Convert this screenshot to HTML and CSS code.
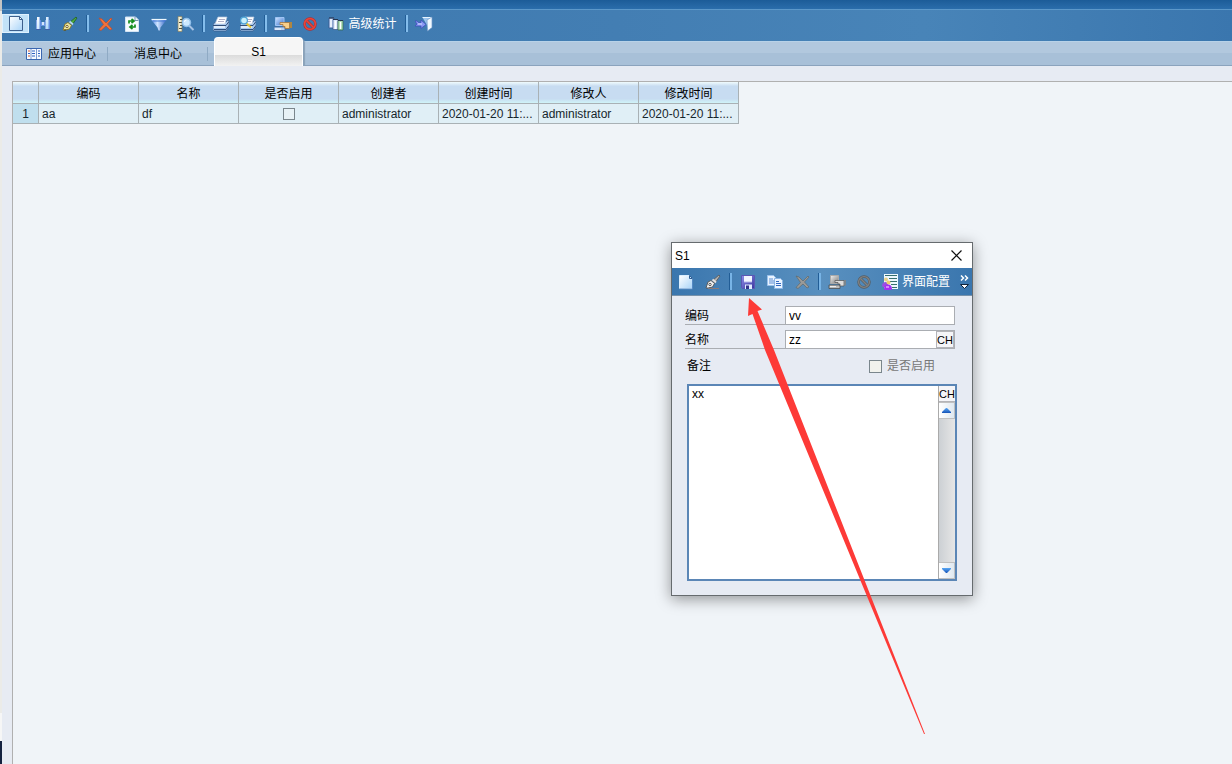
FILE: index.html
```html
<!DOCTYPE html>
<html lang="zh-CN">
<head>
<meta charset="utf-8">
<title>S1</title>
<link rel="stylesheet" href="styles.css">
</head>
<body>
<svg class="defs" aria-hidden="true">
  <defs>
    <linearGradient id="paper" x1="0" y1="0" x2="1" y2="1"><stop offset="0" stop-color="#fff"/><stop offset="1" stop-color="#a9d4f8"/></linearGradient>
    <linearGradient id="lens" x1="0" y1="0" x2="1" y2="0"><stop offset="0" stop-color="#6f9ce6"/><stop offset=".5" stop-color="#e4f0ff"/><stop offset="1" stop-color="#5a8adb"/></linearGradient>
    <linearGradient id="funnel" x1="0" y1="0" x2="1" y2="0"><stop offset="0" stop-color="#5b8fe6"/><stop offset=".4" stop-color="#cfe4ff"/><stop offset="1" stop-color="#2f62c4"/></linearGradient>
    <linearGradient id="floppy" x1="0" y1="0" x2="1" y2="1"><stop offset="0" stop-color="#8e8ee8"/><stop offset="1" stop-color="#3a36a0"/></linearGradient>
    <linearGradient id="grayfill" x1="0" y1="0" x2="1" y2="1"><stop offset="0" stop-color="#f2f2f2"/><stop offset="1" stop-color="#777"/></linearGradient>
    <linearGradient id="screen" x1="0" y1="0" x2="1" y2="1"><stop offset="0" stop-color="#cfe4ff"/><stop offset="1" stop-color="#3b74d0"/></linearGradient>
    <linearGradient id="arrowblue" x1="0" y1="0" x2="0" y2="1"><stop offset="0" stop-color="#5aa8f4"/><stop offset="1" stop-color="#1453b8"/></linearGradient>
  </defs>
  <symbol id="i-new" viewBox="0 0 16 16"><path d="M1.5.5h10l3 3v11h-13z" fill="url(#paper)" stroke="#3d5f8c"/><path d="M11.500.5v3h3z" fill="#fff" stroke="#3d5f8c"/></symbol>
  <symbol id="i-page" viewBox="0 0 16 16"><path d="M1.5 1.500h10l3 3v10h-13z" fill="url(#paper)" stroke="#dcefff"/><path d="M11.500 1.500v3h3z" fill="#c9e3fa" stroke="#2f5f96"/><path d="M14.500 5v10h-13" fill="none" stroke="#5489c4"/></symbol>
  <symbol id="i-find" viewBox="0 0 16 16"><path d="M2 1h3v3h1v10H1V4h1zM11 1h3v3h1v10h-5V4h1z" fill="url(#paper)"/><path d="M5 1v3h1v10H4.500V1zM14 1v3h1v10h-1.500V1z" fill="#5f8be0"/><path d="M1 4h1v10H1zM10 4h1v10h-1z" fill="#88a8e6"/><path d="M6 6h4v4H6z" fill="#6f9ae4"/><path d="M7 6h2v3H7z" fill="#d6e6fc"/><path d="M1 13.500h5M10 13.500h5" stroke="#3f5fa8"/></symbol>
  <symbol id="i-pen" viewBox="0 0 16 16"><path d="M14 1l1 1-5 7-2.500-2.500z" fill="#4cab3c" stroke="#215c2b" stroke-width=".8"/><path d="M7.500 5.500l3.500 3" stroke="#b4d4f4" stroke-width="2"/><path d="M6 6.500l3.500 3-2 3.500-4.500 1H1L3 8z" fill="#f0e9a0" stroke="#877322" stroke-width=".9"/><circle cx="5" cy="10.500" r="1.200" fill="#fff" stroke="#58480f" stroke-width=".8"/><path d="M2 14h2" stroke="#58480f"/></symbol>
  <symbol id="i-del" viewBox="0 0 16 16"><path d="M2 2l3 1 4 4 5-5 1 1-4.500 5L15 13l-2 1-4-4-5 4.500-2-1L6.500 8.500z" fill="#f0733b" stroke="#c2492b" stroke-width=".7"/></symbol>
  <symbol id="i-refresh" viewBox="0 0 16 16"><path d="M1.500 1h10l3 3v11.500h-13z" fill="#f6fbff" stroke="#d4e4f4"/><path d="M11 1v3.500h3.500" fill="none" stroke="#7393ae"/><path d="M5 7.500V5h4M7.500 3l2.500 2-2.500 2M11 8.500V11H7M8.500 9L6 11l2.500 2" fill="none" stroke="#168f20" stroke-width="1.700"/></symbol>
  <symbol id="i-filter" viewBox="0 0 16 16"><path d="M.5 4h15L9.500 11.500 9 14.500H7.500L6.500 11.500z" fill="url(#funnel)"/><path d="M.5 3.500h15" stroke="#eef8ff" stroke-width="1.200"/><path d="M2 5h12" stroke="#4379d4"/></symbol>
  <symbol id="i-search" viewBox="0 0 18 16"><path d="M1 .5h4v15H1z" fill="#f2edcf" stroke="#857f61" stroke-width=".7"/><path d="M3 3.500h2M2 6.500h3M3 9.500h2M2 12.500h3" stroke="#51513d"/><path d="M12 9.500l4.500 4.500" stroke="#a6c2e4" stroke-width="2"/><circle cx="9.500" cy="6.500" r="4" fill="#cce9ff" stroke="#91bfe9" stroke-width="1.500"/><path d="M7.500 6q0-2 2-2" stroke="#fff" fill="none"/></symbol>
  <symbol id="i-print" viewBox="0 0 16 16"><path d="M1 7l3-1h9l2-2 1 1v6l-3 4H1L0 14V9z" fill="#a6c8ee" stroke="#375a88" stroke-width=".7"/><path d="M5 1h9l-2 7H2z" fill="#fff" stroke="#b4c4de" stroke-width=".7"/><path d="M6 3.500h6M5 5.500h6" stroke="#b0aec6"/><path d="M0 9.500h13l3-4" fill="none" stroke="#334e78"/><path d="M1 11h11" stroke="#f3faff" stroke-width="1.500"/><path d="M1 13.500h12l3-4" fill="none" stroke="#2d4d7c"/></symbol>
  <symbol id="i-preview" viewBox="0 0 16 16"><use href="#i-print"/><path d="M6 7l5 4.500" stroke="#e9c737" stroke-width="2"/><circle cx="4" cy="4.500" r="3.400" fill="#c8effc" stroke="#4fa4d6" stroke-width="1.200"/></symbol>
  <symbol id="i-pc" viewBox="0 0 18 16"><path d="M1.500 1.500h8.500v8H1.500z" fill="url(#screen)" stroke="#9fc4f4"/><path d="M0 11h11v3.500H0z" fill="#b4d0f2" stroke="#3a5f96" stroke-width=".7"/><path d="M1 13h6" stroke="#fff"/><path d="M6 6.500h9.500v6H11v-2H9V8.500H6z" fill="#f8cf8a" stroke="#a8702f" stroke-width=".7"/><path d="M15.500 6H18v6h-2.500z" fill="#b08640"/></symbol>
  <symbol id="i-ban" viewBox="0 0 16 16"><g fill="none" stroke="#b3282b" stroke-width="2.600"><circle cx="8" cy="8" r="5.400"/><path d="M4.500 4.500l7 7"/></g><g fill="none" stroke="#e6463b" stroke-width="1.600"><circle cx="8" cy="8" r="5.400"/><path d="M4.500 4.500l7 7"/></g></symbol>
  <symbol id="i-books" viewBox="0 0 16 16"><path d="M1 2h5v10H1z" fill="#b9d0f6" stroke="#3b5488" stroke-width=".7"/><path d="M5 3.500h5v10H5z" fill="#dce9ff" stroke="#3b5488" stroke-width=".7"/><path d="M10 4.500h5v9.500h-5z" fill="#a9dbb1" stroke="#34694c" stroke-width=".7"/><path d="M3 3v8M7.500 5v8M12.500 6v7" stroke="#fff" stroke-width="1.300"/><path d="M1 2h5M5 3.500h5M10 4.500h5" stroke="#25354f"/></symbol>
  <symbol id="i-exit" viewBox="0 0 18 16"><path d="M7.500 1.500h9v10h-3" fill="#9cc4ee" stroke="#e8f5ff"/><path d="M12 4l5-3v10.500L12.500 15z" fill="#f2f9ff" stroke="#7199c8" stroke-width=".7"/><path d="M0 5h2l1.500 1.500H6V4l5 4.500-5 4V10H0l2-2z" fill="#8a99f2" stroke="#3d48ba" stroke-width=".7"/><path d="M3 8h4" stroke="#d7dcff"/></symbol>
  <symbol id="i-app" viewBox="0 0 16 12"><path d="M.5.5h15v11H.5z" fill="#f7faff" stroke="#3b67b0"/><path d="M5 1v10M10.500 1v10" stroke="#7d9ad0"/><path d="M2 3h2M2 8h2" stroke="#d0562f"/><path d="M2 5.500h2M6 3h3M6 5.500h3M6 8h3M12 3h2M12 5.500h2M12 8h2" stroke="#2f60c0"/></symbol>
  <symbol id="i-graypen" viewBox="0 0 16 16"><path d="M14 1l1 1-5 7-2.500-2.500z" fill="#b2b2b2" stroke="#555" stroke-width=".8"/><path d="M7.500 5.500l3.500 3" stroke="#e4e4e4" stroke-width="2"/><path d="M6 6.500l3.500 3-2 3.500-4.500 1H1L3 8z" fill="#f4f4f4" stroke="#555" stroke-width=".9"/><circle cx="5" cy="10.500" r="1.200" fill="#fff" stroke="#333" stroke-width=".8"/><path d="M3 14.500h11" stroke="#8a7a78"/></symbol>
  <symbol id="i-save" viewBox="0 0 16 16"><path d="M1.500 1.500h13v13h-12l-1-1z" fill="url(#floppy)" stroke="#5a58b4"/><path d="M4 2h8v6H4z" fill="#f2f5ff"/><path d="M4 8h8" stroke="#b5b8e8"/><path d="M5 10.500h7V15H5z" fill="#e2ecff"/><path d="M6 11.500h3V15H6z" fill="#33358c"/></symbol>
  <symbol id="i-copy" viewBox="0 0 16 14"><path d="M.5.500h6l2 2v8h-8z" fill="#eaf4ff" stroke="#9cc2ec"/><path d="M2 4h4M2 6h5M2 8h5" stroke="#5a8cd4"/><path d="M7.500 3.500h6l2 2v8h-8z" fill="#eaf4ff" stroke="#8ab4e4"/><path d="M9 6.500h3M9 8.500h5M9 10.500h5" stroke="#3468c0"/></symbol>
  <symbol id="i-graydel" viewBox="0 0 16 16"><path d="M2 2l3 1 4 4 5-5 1 1-4.500 5L15 13l-2 1-4-4-5 4.500-2-1L6.500 8.500z" fill="#9a9a98" stroke="#5f686c" stroke-width=".7"/></symbol>
  <symbol id="i-graypc" viewBox="0 0 18 16"><path d="M2.500 1.500h8v8h-8z" fill="url(#grayfill)" stroke="#aaa"/><path d="M1 11h11v3.500H1z" fill="#bbb" stroke="#444" stroke-width=".7"/><path d="M2 12.500h6" stroke="#eee"/><path d="M7 6.500h9v5.500h-4v-2h-2V8.500H7z" fill="#ddd" stroke="#555" stroke-width=".7"/><path d="M16 6h2v5.500h-2z" fill="#7c858c"/></symbol>
  <symbol id="i-grayban" viewBox="0 0 16 16"><g fill="none" stroke="#565c60" stroke-width="2.600"><circle cx="8" cy="8" r="5.400"/><path d="M4.500 4.500l7 7"/></g><g fill="none" stroke="#7f8284" stroke-width="1.400"><circle cx="8" cy="8" r="5.400"/><path d="M4.500 4.500l7 7"/></g></symbol>
  <symbol id="i-config" viewBox="0 0 16 16"><path d="M2 0h14v15H2z" fill="#eef8ff"/><path d="M3 1.500h12M7 4.500h8M8 7.500h7M9 10.500h6M10 13.500h5" stroke="#39706e"/><circle cx="4" cy="5.500" r="2" fill="#e8d088"/><path d="M0 12q0-4 4-4l2 1v4H1z" fill="#9a50e0"/><circle cx="6.500" cy="8.500" r="2" fill="#f0d070"/><path d="M2 15q0-4.500 4-4.500t4 4.500l-1 1H3z" fill="#a530f0"/><path d="M4 13h3" stroke="#e3a5ff" stroke-width="1.500"/></symbol>
</svg>

<div class="app">
  <div class="edge"><span class="edge-top"></span><span class="edge-mid"></span><span class="edge-low"></span><span class="edge-dark"></span></div>
  <div class="main">
    <header class="caption"></header>
    <div class="toolbar main-tools" role="toolbar">
      <button class="tool selected" aria-label="新增"><svg><use href="#i-new"/></svg></button>
      <button class="tool" aria-label="查找"><svg><use href="#i-find"/></svg></button>
      <button class="tool" aria-label="修改"><svg><use href="#i-pen"/></svg></button>
      <span class="sep"></span>
      <button class="tool" aria-label="删除"><svg><use href="#i-del"/></svg></button>
      <button class="tool" aria-label="刷新"><svg><use href="#i-refresh"/></svg></button>
      <button class="tool" aria-label="过滤"><svg><use href="#i-filter"/></svg></button>
      <button class="tool" aria-label="查询"><svg class="wide"><use href="#i-search"/></svg></button>
      <span class="sep"></span>
      <button class="tool" aria-label="打印"><svg><use href="#i-print"/></svg></button>
      <button class="tool" aria-label="打印预览"><svg><use href="#i-preview"/></svg></button>
      <span class="sep"></span>
      <button class="tool" aria-label="启用"><svg class="wide"><use href="#i-pc"/></svg></button>
      <button class="tool" aria-label="禁用"><svg><use href="#i-ban"/></svg></button>
      <button class="tool labelled"><svg><use href="#i-books"/></svg>高级统计</button>
      <span class="sep"></span>
      <button class="tool" aria-label="退出"><svg class="wide"><use href="#i-exit"/></svg></button>
    </div>
    <nav class="tabs">
      <a class="tab first" href="#"><svg class="app-icon"><use href="#i-app"/></svg>应用中心</a>
      <a class="tab" href="#">消息中心</a>
      <a class="tab active" href="#">S1</a>
    </nav>
    <main class="content">
      <table class="grid">
        <thead>
          <tr><th class="num"></th><th>编码</th><th>名称</th><th>是否启用</th><th>创建者</th><th>创建时间</th><th>修改人</th><th>修改时间</th></tr>
        </thead>
        <tbody>
          <tr><td class="num">1</td><td>aa</td><td>df</td><td class="mid"><input class="check" type="checkbox" aria-label="是否启用"></td><td>administrator</td><td>2020-01-20 11:...</td><td>administrator</td><td>2020-01-20 11:...</td></tr>
        </tbody>
      </table>
    </main>
  </div>
</div>

<section class="dialog" role="dialog" aria-labelledby="dialog-title">
  <div class="dialog-head">
    <span id="dialog-title">S1</span>
    <button class="close" aria-label="关闭"><svg viewBox="0 0 11 11"><path d="M.5.500l10 10M10.500.500l-10 10" fill="none" stroke="#111" stroke-width="1.200"/></svg></button>
  </div>
  <div class="toolbar dialog-tools" role="toolbar">
    <button class="tool" aria-label="新增"><svg><use href="#i-page"/></svg></button>
    <button class="tool" aria-label="修改"><svg><use href="#i-graypen"/></svg></button>
    <span class="sep"></span>
    <button class="tool" aria-label="保存"><svg><use href="#i-save"/></svg></button>
    <button class="tool" aria-label="复制"><svg><use href="#i-copy"/></svg></button>
    <button class="tool" aria-label="删除"><svg><use href="#i-graydel"/></svg></button>
    <span class="sep"></span>
    <button class="tool" aria-label="启用"><svg class="wide"><use href="#i-graypc"/></svg></button>
    <button class="tool" aria-label="禁用"><svg><use href="#i-grayban"/></svg></button>
    <button class="tool labelled"><svg><use href="#i-config"/></svg>界面配置</button>
    <button class="more" aria-label="更多"><svg viewBox="0 0 9 14"><path d="M1 .5l2.500 2.500L1 5.500M5 .5L7.500 3 5 5.500" fill="none" stroke="#fff" stroke-width="1.500"/><path d="M.5 9.500h8l-4 4z" fill="#fff" stroke="#10243c"/></svg></button>
  </div>
  <form class="form">
    <div class="field"><label for="code">编码</label><div class="box"><input id="code" type="text" value="vv"></div></div>
    <div class="field"><label for="name">名称</label><div class="box"><input id="name" type="text" value="zz"><button class="lang" type="button">CH</button></div></div>
    <div class="note-row"><label for="note">备注</label><label class="enabled"><input class="check" type="checkbox" disabled>是否启用</label></div>
    <div class="note">
      <textarea id="note">xx</textarea>
      <div class="rail">
        <button class="lang" type="button">CH</button>
        <button class="step" type="button" aria-label="向上"><svg viewBox="0 0 9 5"><path d="M0 5V4l4-4h1l4 4v1z" fill="url(#arrowblue)"/></svg></button>
        <div class="track"></div>
        <button class="step" type="button" aria-label="向下"><svg viewBox="0 0 9 5"><path d="M0 0v1l4 4h1l4-4V0z" fill="url(#arrowblue)"/></svg></button>
      </div>
    </div>
  </form>
</section>

<svg class="pointer" viewBox="0 0 178 437" aria-hidden="true"><path d="M2 0L15 11.500 10.500 13 27 52 178 436 177 436 18 52 5.500 16 1 18z" fill="#fd3a37"/></svg>
</body>
</html>
```

FILE: styles.css
```css
* { box-sizing: border-box; }

body {
  margin: 0;
  position: relative;
  height: 100vh;
  overflow: hidden;
  font: 12px/16px "Liberation Sans", "Noto Sans CJK SC", sans-serif;
  color: #000;
}

button, input, textarea { font: inherit; color: inherit; margin: 0; }
button { border: 0; padding: 0; background: none; }
svg { display: block; flex: none; }
.defs { position: absolute; width: 0; height: 0; }

.app { display: flex; height: 100%; background: #e7ebf3; }
.edge { width: 2px; display: flex; flex-direction: column; }
.edge-top { height: 11px; background: #c4c4c4; }
.edge-mid { flex: 1; background: #ebebe8; }
.edge-low { height: 28px; background: #f6f6f6; }
.edge-dark { height: 23px; background: #14213f; }
.main { flex: 1; min-width: 0; display: flex; flex-direction: column; }

.caption { height: 9px; background: linear-gradient(#1c5c98, #2a6dab); }

.toolbar { display: flex; align-items: center; }
.main-tools {
  height: 32px;
  padding-bottom: 4px;
  border-top: 1px solid #5c98ca;
  background: linear-gradient(90deg, #3a76ae, #437eb3 50%, #4884b8 75%, #3a76ae);
}
.tool {
  width: 27px;
  height: 19px;
  flex: none;
  display: flex;
  align-items: center;
  justify-content: center;
}
.tool svg { width: 16px; height: 16px; }
.tool svg.wide { width: 18px; }
.selected { background: #c2e2f8; border: 1px solid #dff1ff; }
.labelled { width: 79px; gap: 4px; color: #fff; white-space: nowrap; }
.sep { width: 8px; height: 17px; display: flex; justify-content: center; flex: none; }
.sep::before { content: ""; width: 2px; background: #84bdec; border-left: 1px solid #215d96; }

.tabs {
  height: 25px;
  display: flex;
  align-items: flex-end;
  border-top: 1px solid #b8d2e8;
  border-bottom: 1px solid #8ba3bd;
  background: linear-gradient(#b2c8de 50%, #a8c0d8 50%);
}
.tab {
  width: 100px;
  height: 23px;
  display: flex;
  align-items: center;
  justify-content: center;
  color: #000;
  text-decoration: none;
  background: linear-gradient(#8faac4, #8faac4) right center / 1px 14px no-repeat;
}
.tab.first { width: 106px; gap: 6px; padding-left: 12px; }
.app-icon { width: 16px; height: 12px; }
.tab.active {
  width: 89px;
  height: 29px;
  margin: 0 0 -1px 6px;
  border-radius: 4px 4px 0 0;
  border: 1px solid #fff;
  border-bottom: 0;
  background: linear-gradient(#f6f6f6 60%, #dcdcdc 62%, #f2f2f2);
  box-shadow: 2px 2px 1px #8aa2ba;
  clip-path: inset(0 -3px 0 0);
}

.content {
  flex: 1;
  margin: 15px 0 0 10px;
  border-top: 1px solid #b0b0b0;
  border-left: 1px solid #b0b0b0;
  background: #f0f4f8;
}
.grid { border-collapse: separate; border-spacing: 0; table-layout: fixed; width: 726px; }
.grid th, .grid td {
  padding: 0 3px;
  border-right: 1px solid #a9b1b5;
  border-bottom: 1px solid #a9b1b5;
  white-space: nowrap;
  overflow: hidden;
}
.grid th {
  height: 22px;
  padding-top: 2px;
  font-weight: 400;
  background: linear-gradient(#f0fbfd, #c7dcf1 20%, #c7dcf1 80%, #d0f4f8);
}
.grid td { height: 20px; text-align: left; color: #17262c; background: #e0eff6; }
.grid .num { width: 26px; text-align: center; }
.grid td.num { background: #c0dfee; }
.grid td.mid { text-align: center; }
.check {
  appearance: none;
  width: 13px;
  height: 13px;
  border: 1px solid #7a868c;
  background: #e8f2f6;
}
.grid .check { display: block; width: 12px; height: 12px; margin: 0 auto; }

.dialog {
  position: absolute;
  left: 671px;
  top: 242px;
  width: 302px;
  border: 1px solid #666b6e;
  background: #e7ebf3;
  box-shadow: 0 3px 14px rgba(0, 0, 0, .4);
}
.dialog-head {
  height: 25px;
  padding: 0 10px 0 3px;
  display: flex;
  align-items: center;
  justify-content: space-between;
  background: #fff;
}
.close svg { width: 11px; height: 11px; }
.dialog-tools {
  height: 28px;
  border-bottom: 1px solid #7892aa;
  background: linear-gradient(90deg, #3a76ae, #5990bf 50%, #3a76ae);
}
.dialog-tools .labelled { width: 78px; }
.dialog-tools .sep::before { background: #78b4e6; }
.more { margin: 0 3px 0 auto; }
.more svg { width: 9px; height: 14px; }

.form { padding: 10px 15px 14px; }
.field { display: flex; height: 19px; margin: 0 2px 5px -2px; }
.field label { flex: none; width: 100px; line-height: 21px; border-bottom: 1px solid #aaadb2; }
.box { flex: 1; min-width: 0; display: flex; border: 1px solid #aaadb2; background: #fff; }
.box input { flex: 1; min-width: 0; border: 0; padding: 0 3px; background: none; outline: 0; }
.lang {
  width: 18px;
  font-size: 11px;
  line-height: 14px;
  border: 1px solid #b4b4b8;
  background: #f5f5f8;
  flex: none;
}
.note-row { display: flex; justify-content: space-between; align-items: center; height: 20px; margin: 7px 0 8px; }
.enabled { display: flex; align-items: center; gap: 5px; padding-right: 22px; color: #777; }
.enabled .check { background: #f1f2ed; }
.note { display: flex; height: 197px; border: 2px solid #5b86b6; background: #fff; }
.note textarea { flex: 1; min-width: 0; border: 0; padding: 0 3px; resize: none; outline: 0; background: none; }
.rail { width: 17px; flex: none; display: flex; flex-direction: column; border-left: 1px solid #aaa; }
.rail .lang { width: 16px; height: 16px; border-width: 0 0 1px; }
.step {
  height: 17px;
  display: flex;
  align-items: center;
  justify-content: center;
  border: 1px solid #c0c0c0;
  border-left: 0;
  background: linear-gradient(90deg, #fff, #dfe8f0);
}
.step svg { width: 9px; height: 5px; }
.track { flex: 1; background: linear-gradient(90deg, #ccd0d4, #e6e6e6); }

.pointer { position: absolute; left: 747px; top: 298px; width: 178px; height: 437px; pointer-events: none; }
```
